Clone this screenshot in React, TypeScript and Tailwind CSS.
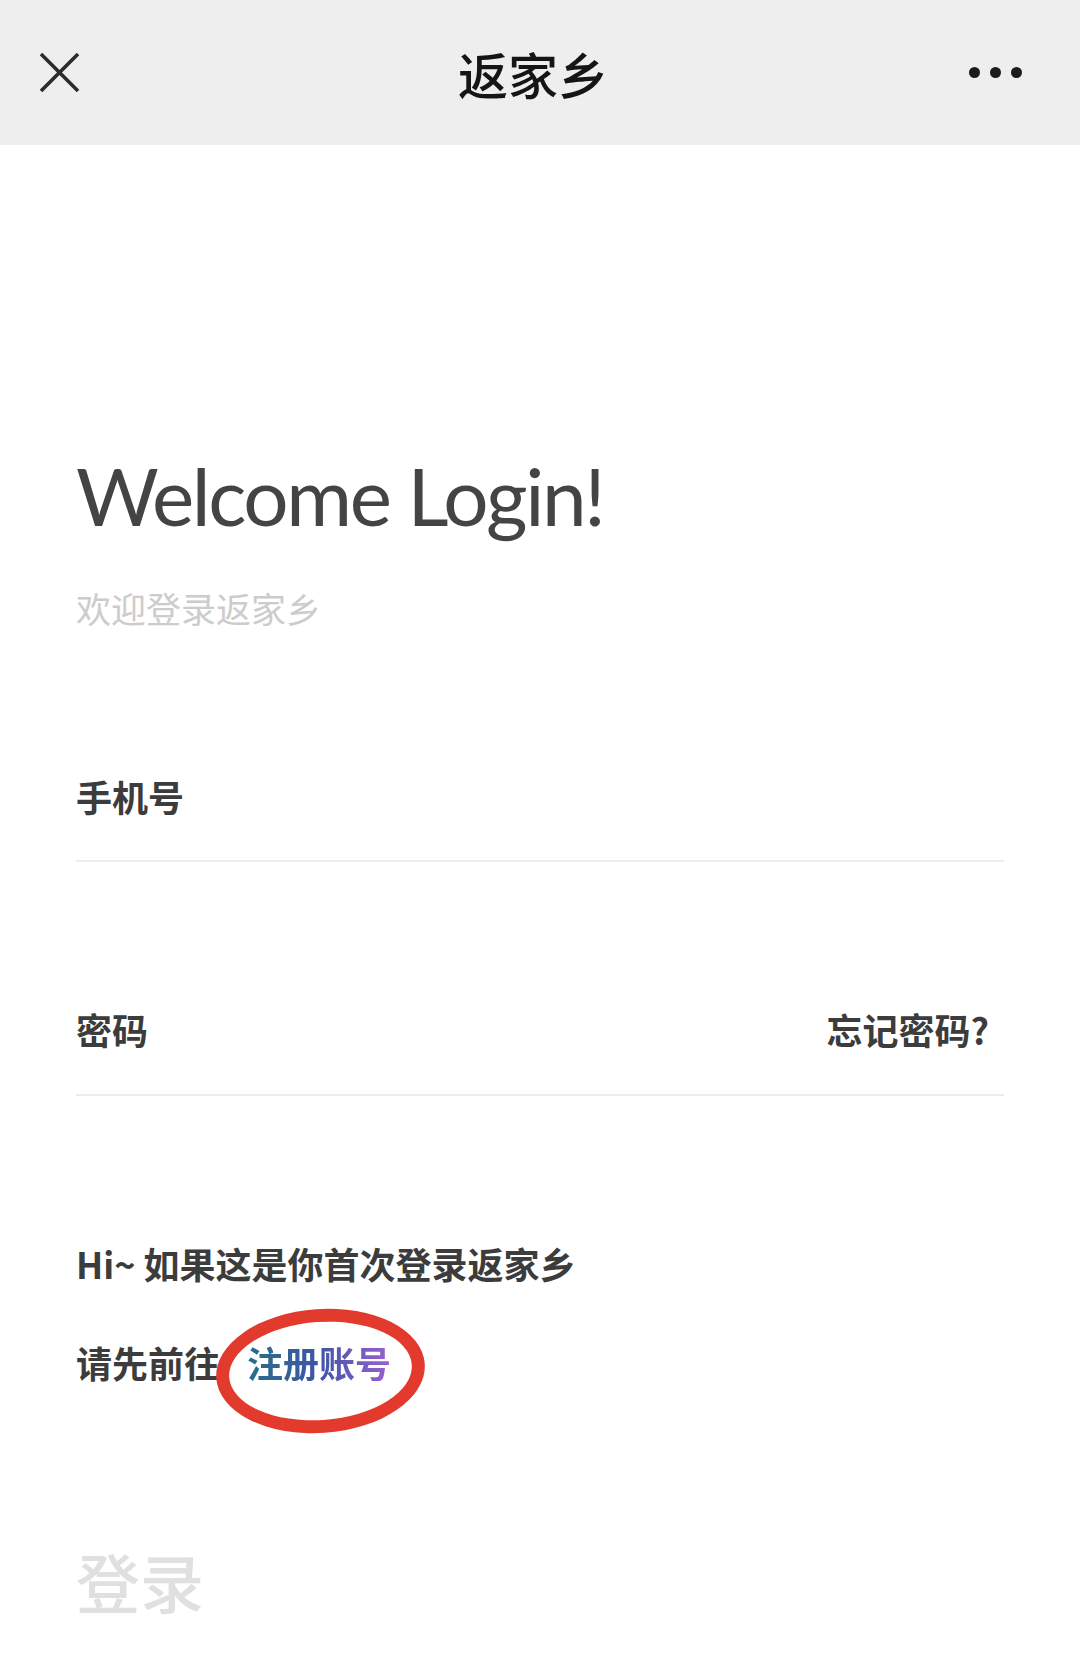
import React from 'react';

const CJK = "font-['Noto_Sans_CJK_SC',sans-serif]";

function CloseIcon() {
  return (
    <svg width="43" height="43" viewBox="0 0 43 43" fill="none">
      <path d="M3 3 L40 40 M40 3 L3 40" stroke="#2b2b2b" strokeWidth="3.6" strokeLinecap="butt" />
    </svg>
  );
}

function MoreIcon() {
  return (
    <div className="flex items-center gap-[10px]">
      <span className="w-[11px] h-[11px] rounded-full bg-[#1c1c1c]" />
      <span className="w-[11px] h-[11px] rounded-full bg-[#1c1c1c]" />
      <span className="w-[11px] h-[11px] rounded-full bg-[#1c1c1c]" />
    </div>
  );
}

export default function App() {
  return (
    <div className={`w-[1080px] h-[1658px] bg-white overflow-hidden ${CJK}`}>
      {/* Top bar */}
      <header className="h-[145px] bg-[#eeeeee] flex items-center justify-between pl-[38px] pr-[58px] relative">
        <CloseIcon />
        <h1 className="absolute left-0 right-[14px] text-center text-[50px] leading-none font-medium text-[#151515] pointer-events-none">
          返家乡
        </h1>
        <MoreIcon />
      </header>

      <main className="px-[76px]">
        {/* Greeting */}
        <h2 className="mt-[310px] h-[80px] flex items-center text-[80px] leading-none text-[#444] font-['Lato','Noto_Sans',sans-serif] tracking-[-2.4px]">
          Welcome Login!
        </h2>
        <p className="mt-[53px] text-[35px] leading-[40px] text-[#cccccc]">欢迎登录返家乡</p>

        {/* Phone */}
        <div className="mt-[148px] pb-[43px] border-b-2 border-[#ededed] w-[928px]">
          <span className="text-[36px] leading-[40px] font-bold text-[#3c3c3c]">手机号</span>
        </div>

        {/* Password */}
        <div className="mt-[147px] pb-[45px] border-b-2 border-[#ededed] w-[928px] flex items-center justify-between pr-[15px]">
          <span className="text-[36px] leading-[40px] font-bold text-[#3c3c3c]">密码</span>
          <span className="text-[36px] leading-[40px] font-bold text-[#3c3c3c]">忘记密码?</span>
        </div>

        {/* Register hint */}
        <p className="mt-[147px] text-[36px] leading-[40px] font-bold text-[#3c3c3c]">
          Hi~ 如果这是你首次登录返家乡
        </p>
        <div className="mt-[59px] flex items-center text-[36px] leading-[40px] font-bold text-[#3c3c3c]">
          <span>请先前往</span>
          <span className="relative ml-[27px]">
            <span className="bg-gradient-to-r from-[#246f86] via-[#3d55a6] to-[#9a5fd2] bg-clip-text text-transparent">
              注册账号
            </span>
            <span className="absolute left-[-31px] top-[-33px] w-[209px] h-[124px] rounded-[50%] border-[13px] border-[#e23b2e] rotate-[-4deg]" />
          </span>
        </div>

        {/* Submit */}
        <button className="mt-[166px] block text-[64px] leading-[64px] font-medium text-[#e0e0e0]">
          登录
        </button>
      </main>
    </div>
  );
}
